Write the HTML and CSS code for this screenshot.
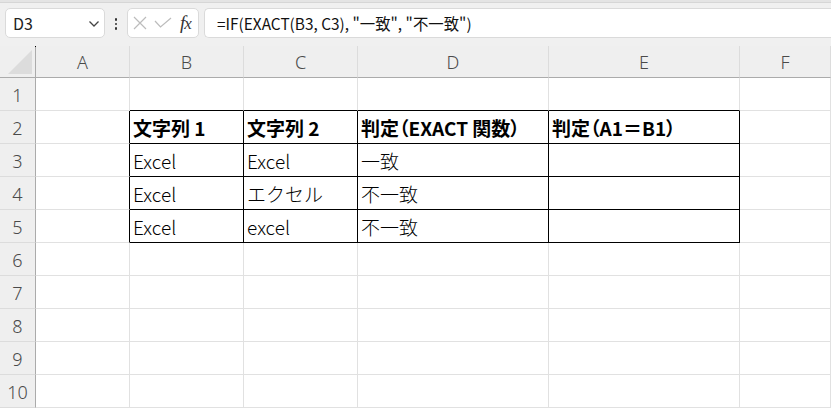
FILE: index.html
```html
<!DOCTYPE html>
<html lang="ja">

<head>
    <meta charset="UTF-8">
    <meta name="viewport" content="width=device-width, initial-scale=1.0">
    <title>EXACT 関数</title>
    <link rel="stylesheet" href="styles.css">
</head>

<body>
    <div class="ribbon-edge"></div>

    <!-- 数式バー -->
    <div class="formula-bar">
        <div class="name-box">
            <span>D3</span>
            <svg class="chevron" width="12" height="8" viewBox="0 0 12 8">
                <path d="M1.5 1.5 L6 6 L10.5 1.5" fill="none" stroke="#444" stroke-width="1.3"/>
            </svg>
        </div>
        <div class="grip">
            <span></span><span></span><span></span>
        </div>
        <div class="fx-box">
            <svg width="16" height="16" viewBox="0 0 16 16">
                <path d="M2 2 L14 14 M14 2 L2 14" stroke="#bcbcbc" stroke-width="1.2" fill="none"/>
            </svg>
            <svg width="18" height="12" viewBox="0 0 18 12">
                <path d="M1 4 L6.5 10 L17 1" stroke="#bcbcbc" stroke-width="1.2" fill="none"/>
            </svg>
            <span class="fx">f<i>x</i></span>
        </div>
        <div class="formula-input">=IF(EXACT(B3, C3), "一致", "不一致")</div>
    </div>

    <!-- シート -->
    <div class="sheet">
        <div class="corner"><span class="tri"></span><span class="dot"></span></div>
        <div class="col-head">A</div>
        <div class="col-head">B</div>
        <div class="col-head">C</div>
        <div class="col-head">D</div>
        <div class="col-head">E</div>
        <div class="col-head">F</div>

        <div class="row-head">1</div>
        <div class="cell"></div>
        <div class="cell edge-b"></div>
        <div class="cell edge-b"></div>
        <div class="cell edge-b"></div>
        <div class="cell edge-b"></div>
        <div class="cell"></div>

        <div class="row-head">2</div>
        <div class="cell edge-r"></div>
        <div class="cell boxed head">文字列 1</div>
        <div class="cell boxed head">文字列 2</div>
        <div class="cell boxed head">判定<span class="paren">（</span>EXACT 関数<span class="paren">）</span></div>
        <div class="cell boxed head">判定<span class="paren">（</span>A1<span class="paren">＝</span>B1<span class="paren">）</span></div>
        <div class="cell"></div>

        <div class="row-head">3</div>
        <div class="cell edge-r"></div>
        <div class="cell boxed">Excel</div>
        <div class="cell boxed">Excel</div>
        <div class="cell boxed">一致</div>
        <div class="cell boxed"></div>
        <div class="cell"></div>

        <div class="row-head">4</div>
        <div class="cell edge-r"></div>
        <div class="cell boxed">Excel</div>
        <div class="cell boxed">エクセル</div>
        <div class="cell boxed">不一致</div>
        <div class="cell boxed"></div>
        <div class="cell"></div>

        <div class="row-head">5</div>
        <div class="cell edge-r"></div>
        <div class="cell boxed">Excel</div>
        <div class="cell boxed">excel</div>
        <div class="cell boxed">不一致</div>
        <div class="cell boxed"></div>
        <div class="cell"></div>

        <div class="row-head">6</div>
        <div class="cell"></div><div class="cell"></div><div class="cell"></div>
        <div class="cell"></div><div class="cell"></div><div class="cell"></div>

        <div class="row-head">7</div>
        <div class="cell"></div><div class="cell"></div><div class="cell"></div>
        <div class="cell"></div><div class="cell"></div><div class="cell"></div>

        <div class="row-head">8</div>
        <div class="cell"></div><div class="cell"></div><div class="cell"></div>
        <div class="cell"></div><div class="cell"></div><div class="cell"></div>

        <div class="row-head">9</div>
        <div class="cell"></div><div class="cell"></div><div class="cell"></div>
        <div class="cell"></div><div class="cell"></div><div class="cell"></div>

        <div class="row-head">10</div>
        <div class="cell"></div><div class="cell"></div><div class="cell"></div>
        <div class="cell"></div><div class="cell"></div><div class="cell"></div>
    </div>
</body>

</html>
```

FILE: styles.css
```css
* {
    margin: 0;
    padding: 0;
    box-sizing: border-box;
}

body {
    font-family: "Noto Sans CJK JP", "Noto Sans", sans-serif;
    background: #f0f0f0;
    color: #000;
    overflow: hidden;
}

.ribbon-edge {
    height: 3px;
    background: #e4e4e4;
    border-bottom: 1px solid #d6d6d6;
}

/* 数式バー */
.formula-bar {
    display: flex;
    align-items: flex-start;
    height: 43px;
    padding: 5px 0 0 5px;
}

.name-box {
    width: 100px;
    height: 30px;
    background: #fff;
    border: 1px solid #dadada;
    border-radius: 5px;
    display: flex;
    align-items: center;
    justify-content: space-between;
    padding: 0 4px 0 7px;
    font-size: 16px;
    color: #222;
}

.chevron {
    margin-top: 2px;
}

.grip {
    width: 22px;
    height: 30px;
    display: flex;
    flex-direction: column;
    align-items: center;
    justify-content: center;
    gap: 2px;
    padding-top: 2px;
}

.grip span {
    width: 2.5px;
    height: 2.5px;
    background: #333;
    border-radius: 50%;
}

.fx-box {
    width: 72px;
    height: 30px;
    background: #fff;
    border: 1px solid #dadada;
    border-radius: 5px;
    display: flex;
    align-items: center;
    gap: 6px;
    padding-left: 4px;
}

.fx {
    font-family: "Liberation Serif", "DejaVu Serif", serif;
    font-style: italic;
    font-size: 19px;
    color: #333;
    margin-left: 2px;
    letter-spacing: -1px;
}

.fx i {
    font-size: 17px;
}

.formula-input {
    flex: 1;
    height: 30px;
    margin-left: 5px;
    background: #fff;
    border: 1px solid #dadada;
    border-right: none;
    border-radius: 5px 0 0 5px;
    display: flex;
    align-items: center;
    padding-left: 12px;
    font-size: 15.4px;
    color: #111;
}

/* シート */
.sheet {
    display: grid;
    grid-template-columns: 36px 94px 114px 114px 191px 191px 1fr;
    grid-template-rows: 32px repeat(10, 33px);
    background: #fff;
}

.corner,
.col-head,
.row-head {
    background: #efefef;
    color: #4a4a4a;
    font-family: "Noto Sans", sans-serif;
    font-weight: 300;
    font-size: 18px;
    display: flex;
    align-items: center;
    justify-content: center;
}

.corner {
    position: relative;
    border-right: 1px solid #ababab;
    border-bottom: 1px solid #ababab;
}

.tri {
    position: absolute;
    left: 8px;
    top: 4px;
    width: 24px;
    height: 24px;
    background: #dcdcdc;
    clip-path: polygon(100% 0, 100% 100%, 0 100%);
}

.dot {
    position: absolute;
    right: -1px;
    top: 0;
    width: 1px;
    height: 1px;
    background: #000;
}

.col-head {
    border-right: 1px solid #dcdcdc;
    border-bottom: 1px solid #ababab;
}

.row-head {
    border-right: 1px solid #ababab;
    border-bottom: 1px solid #dcdcdc;
    padding-top: 1px;
}

.cell {
    border-right: 1px solid #e1e1e1;
    border-bottom: 1px solid #e1e1e1;
    display: flex;
    align-items: center;
    padding: 1px 0 0 3px;
    font-size: 19px;
    font-weight: 300;
    line-height: 1;
    white-space: nowrap;
}

.cell.edge-b {
    border-bottom-color: #000;
}

.cell.edge-r {
    border-right-color: #000;
}

.cell.boxed {
    border-right-color: #000;
    border-bottom-color: #000;
}

.cell.head {
    font-weight: 700;
}

.paren {
    font-feature-settings: "palt";
}
```
